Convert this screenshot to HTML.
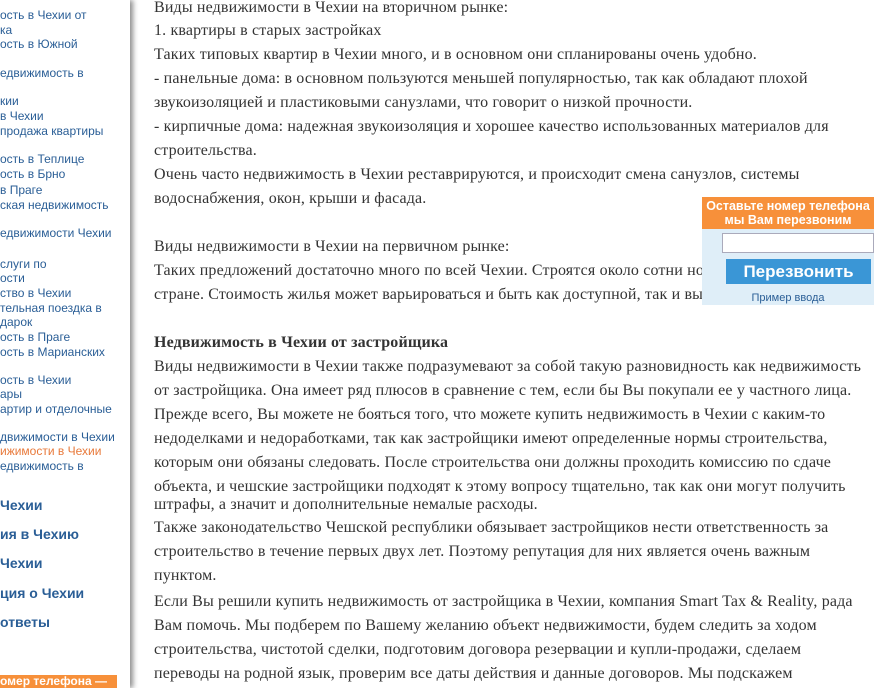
<!DOCTYPE html>
<html><head><meta charset="utf-8"><style>
body{margin:0;width:874px;height:688px;overflow:hidden;background:#fff;position:relative;font-family:"Liberation Serif",serif;}
.sb{position:absolute;left:0;top:0;width:130px;height:688px;background:#fff;box-shadow:3px 0 5px rgba(0,0,0,.45);z-index:2;overflow:hidden}
.s{position:absolute;left:0;font:12px/14px "Liberation Sans",sans-serif;color:#2a5e96;white-space:nowrap}
.b{position:absolute;left:0;font:bold 14px/18px "Liberation Sans",sans-serif;color:#2a5e96;white-space:nowrap}
.m{position:absolute;left:154px;font-size:16px;letter-spacing:0.15px;line-height:18px;color:#333;white-space:nowrap}
.w{position:absolute;left:702px;top:197px;width:172px;z-index:3}
</style></head><body>
<div class="sb">
<div class="s" style="top:8px">ость в Чехии от</div>
<div class="s" style="top:23px">ка</div>
<div class="s" style="top:37px">ость в Южной</div>
<div class="s" style="top:66px">едвижимость в</div>
<div class="s" style="top:94px">кии</div>
<div class="s" style="top:109px">в Чехии</div>
<div class="s" style="top:124px">продажа квартиры</div>
<div class="s" style="top:152px">ость в Теплице</div>
<div class="s" style="top:167px">ость в Брно</div>
<div class="s" style="top:183px">в Праге</div>
<div class="s" style="top:198px">ская недвижимость</div>
<div class="s" style="top:226px">едвижимости Чехии</div>
<div class="s" style="top:257px">слуги по</div>
<div class="s" style="top:271px">ости</div>
<div class="s" style="top:286px">ство в Чехии</div>
<div class="s" style="top:301px">тельная поездка в</div>
<div class="s" style="top:315px">дарок</div>
<div class="s" style="top:330px">ость в Праге</div>
<div class="s" style="top:345px">ость в Марианских</div>
<div class="s" style="top:373px">ость в Чехии</div>
<div class="s" style="top:387px">ары</div>
<div class="s" style="top:402px">артир и отделочные</div>
<div class="s" style="top:430px">движимости в Чехии</div>
<div class="s" style="top:444px;color:#e8793a">ижимости в Чехии</div>
<div class="s" style="top:459px">едвижимость в</div>
<div class="b" style="top:496px">Чехии</div>
<div class="b" style="top:525px">ия в Чехию</div>
<div class="b" style="top:554px">Чехии</div>
<div class="b" style="top:584px">ция о Чехии</div>
<div class="b" style="top:613px">ответы</div>
<div style="position:absolute;left:0;top:675px;width:117px;height:13px;background:#f7903a;color:#fff;font:bold 12px/13px 'Liberation Sans',sans-serif;white-space:nowrap;overflow:hidden">омер телефона —</div>
</div>
<div class="m" style="top:-1px">Виды недвижимости в Чехии на вторичном рынке:</div>
<div class="m" style="top:22px">1. квартиры в старых застройках</div>
<div class="m" style="top:46px">Таких типовых квартир в Чехии много, и в основном они спланированы очень удобно.</div>
<div class="m" style="top:70px">- панельные дома: в основном пользуются меньшей популярностью, так как обладают плохой</div>
<div class="m" style="top:94px">звукоизоляцией и пластиковыми санузлами, что говорит о низкой прочности.</div>
<div class="m" style="top:118px">- кирпичные дома: надежная звукоизоляция и хорошее качество использованных материалов для</div>
<div class="m" style="top:142px">строительства.</div>
<div class="m" style="top:166px">Очень часто недвижимость в Чехии реставрируются, и происходит смена санузлов, системы</div>
<div class="m" style="top:190px">водоснабжения, окон, крыши и фасада.</div>
<div class="m" style="top:238px">Виды недвижимости в Чехии на первичном рынке:</div>
<div class="m" style="top:262px">Таких предложений достаточно много по всей Чехии. Строятся около сотни новых объектов по всей</div>
<div class="m" style="top:286px">стране. Стоимость жилья может варьироваться и быть как доступной, так и высокой.</div>
<div class="m" style="top:334px;font-weight:bold">Недвижимость в Чехии от застройщика</div>
<div class="m" style="top:358px">Виды недвижимости в Чехии также подразумевают за собой такую разновидность как недвижимость</div>
<div class="m" style="top:382px">от застройщика. Она имеет ряд плюсов в сравнение с тем, если бы Вы покупали ее у частного лица.</div>
<div class="m" style="top:406px">Прежде всего, Вы можете не бояться того, что можете купить недвижимость в Чехии с каким-то</div>
<div class="m" style="top:430px">недоделками и недоработками, так как застройщики имеют определенные нормы строительства,</div>
<div class="m" style="top:454px">которым они обязаны следовать. После строительства они должны проходить комиссию по сдаче</div>
<div class="m" style="top:478px;height:16px;overflow:hidden">объекта, и чешские застройщики подходят к этому вопросу тщательно, так как они могут получить</div>
<div class="m" style="top:496px">штрафы, а значит и дополнительные немалые расходы.</div>
<div class="m" style="top:519px">Также законодательство Чешской республики обязывает застройщиков нести ответственность за</div>
<div class="m" style="top:543px">строительство в течение первых двух лет. Поэтому репутация для них является очень важным</div>
<div class="m" style="top:567px">пунктом.</div>
<div class="m" style="top:593px">Если Вы решили купить недвижимость от застройщика в Чехии, компания Smart Tax &amp; Reality, рада</div>
<div class="m" style="top:617px">Вам помочь. Мы подберем по Вашему желанию объект недвижимости, будем следить за ходом</div>
<div class="m" style="top:641px">строительства, чистотой сделки, подготовим договора резервации и купли-продажи, сделаем</div>
<div class="m" style="top:665px">переводы на родной язык, проверим все даты действия и данные договоров. Мы подскажем</div>
<div class="w">
<div style="background:#f7903a;height:32px;color:#fff;font:bold 12.5px/14px 'Liberation Sans',sans-serif;text-align:center;padding-top:2px;box-sizing:border-box;white-space:nowrap">Оставьте номер телефона<br>мы Вам перезвоним</div>
<div style="background:#dfeef8;height:76px;position:relative">
<div style="position:absolute;left:20px;top:4px;width:152px;height:20px;background:#fff;border:1px solid #aab;box-sizing:border-box"></div>
<div style="position:absolute;left:24px;top:30px;width:145px;height:25px;background:#3a96d6;color:#fff;font:bold 17px/25px 'Liberation Sans',sans-serif;text-align:center">Перезвонить</div>
<div style="position:absolute;left:0;width:172px;top:62px;text-align:center;font:11px/14px 'Liberation Sans',sans-serif;color:#2a5e96">Пример ввода</div>
</div></div>
</body></html>
